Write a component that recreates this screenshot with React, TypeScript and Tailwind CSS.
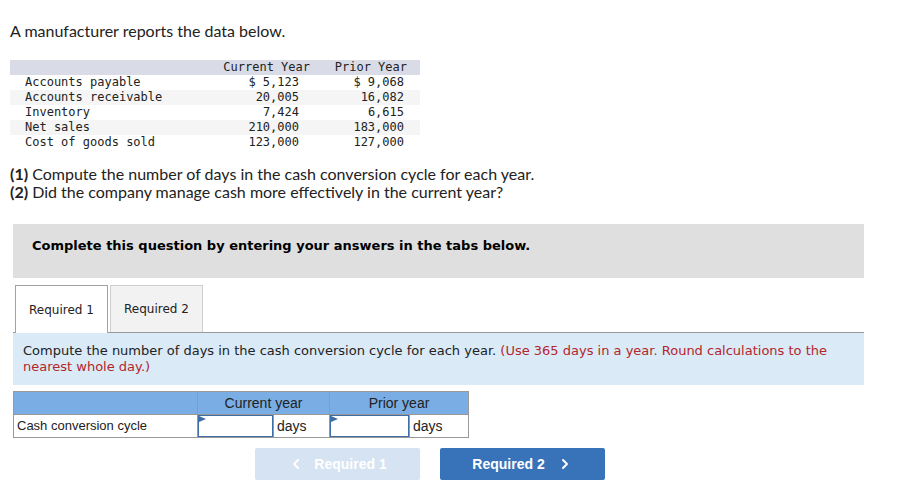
import { ChevronLeft, ChevronRight } from "lucide-react";

const rows = [
  { label: "Accounts payable", cur: "$ 5,123", prior: "$ 9,068" },
  { label: "Accounts receivable", cur: "20,005", prior: "16,082" },
  { label: "Inventory", cur: "7,424", prior: "6,615" },
  { label: "Net sales", cur: "210,000", prior: "183,000" },
  { label: "Cost of goods sold", cur: "123,000", prior: "127,000" },
];

function AnswerInput() {
  return (
    <div className="relative h-[22px] border border-[#3d6ea6] bg-white">
      <svg className="absolute left-0 top-0" width="7" height="7" viewBox="0 0 7 7">
        <path d="M0 0 L7 3 L0 6 Z" fill="#3d6ea6" />
      </svg>
    </div>
  );
}

export default function App() {
  return (
    <div className="w-[909px] min-h-[502px] bg-white pl-[10px] pt-[21px] text-[#222]">
      <p className="font-['Lato',sans-serif] text-[16px] leading-[20px]">
        A manufacturer reports the data below.
      </p>

      <div className="mt-[19px] w-[410px] font-['DejaVu_Sans_Mono',monospace] text-[12px] leading-[15px] text-[#222]">
        <div className="flex h-[15px] bg-[#d9dce6]">
          <div className="w-[210px]" />
          <div className="w-[95px] pr-[5px] text-right">Current Year</div>
          <div className="w-[105px] pr-[13px] text-right">Prior Year</div>
        </div>
        {rows.map((r, i) => (
          <div key={r.label} className={`flex h-[15px] ${i % 2 === 1 ? "bg-[#f5f5f5]" : "bg-white"}`}>
            <div className="w-[210px] pl-[15px]">{r.label}</div>
            <div className="w-[95px] pr-[16px] text-right">{r.cur}</div>
            <div className="w-[105px] pr-[16px] text-right">{r.prior}</div>
          </div>
        ))}
      </div>

      <div className="mt-[15px] font-['Lato',sans-serif] text-[16px] leading-[18px]">
        <p>
          <b>(1)</b> Compute the number of days in the cash conversion cycle for each year.
        </p>
        <p>
          <b>(2)</b> Did the company manage cash more effectively in the current year?
        </p>
      </div>

      <div className="ml-[3px] mt-[23px] h-[54px] w-[851px] bg-[#dfdfdf] pl-[19px] pt-[14px] font-['DejaVu_Sans',sans-serif] text-[13px] font-bold leading-[16px] text-black">
        Complete this question by entering your answers in the tabs below.
      </div>

      <div className="ml-[3px] mt-[7px] w-[851px] font-['DejaVu_Sans',sans-serif]">
        <div className="flex gap-[2px] pl-[2px]">
          <div className="-mb-px flex h-[48px] w-[93px] items-center justify-center border border-b-0 border-[#a3a3a3] bg-white text-[12px] text-[#222]">
            Required 1
          </div>
          <div className="flex h-[47px] w-[93px] items-center justify-center border border-b-0 border-[#cfcfcf] bg-[#f2f2f2] text-[12px] text-[#222]">
            Required 2
          </div>
        </div>
        <div className="border-t border-[#999]" />
        <div className="h-[52px] bg-[#daeaf7] px-[10px] pt-[10px] text-[13px] leading-[16px] text-[#222]">
          Compute the number of days in the cash conversion cycle for each year.{" "}
          <span className="text-[#b3262b]">(Use 365 days in a year. Round calculations to the</span>
          <br />
          <span className="text-[#b3262b]">nearest whole day.)</span>
        </div>

        <table className="mt-[6px] w-[455px] table-fixed border-collapse font-['Liberation_Sans',sans-serif] text-[14px] text-[#222]">
          <colgroup>
            <col className="w-[184px]" />
            <col className="w-[76px]" />
            <col className="w-[56px]" />
            <col className="w-[80px]" />
            <col className="w-[59px]" />
          </colgroup>
          <thead>
            <tr className="h-[23px] bg-[#79ade3]">
              <th className="border border-[#999]" />
              <th colSpan={2} className="border border-[#999] text-center font-normal">
                Current year
              </th>
              <th colSpan={2} className="border border-[#999] text-center font-normal">
                Prior year
              </th>
            </tr>
          </thead>
          <tbody>
            <tr className="h-[23px]">
              <td className="border border-[#999] pl-[3px] text-[13px]">Cash conversion cycle</td>
              <td className="border border-[#999] p-0">
                <AnswerInput />
              </td>
              <td className="border border-[#999] pl-[3px]">days</td>
              <td className="border border-[#999] p-0">
                <AnswerInput />
              </td>
              <td className="border border-[#999] pl-[3px]">days</td>
            </tr>
          </tbody>
        </table>
      </div>

      <div className="mt-[10px] flex gap-[20px] pl-[245px] font-['Liberation_Sans',sans-serif] text-[14px] font-bold text-white">
        <button className="flex h-[32px] w-[165px] items-center justify-center gap-[10px] rounded-[2px] bg-[#d6e3f2]">
          <ChevronLeft size={16} strokeWidth={3} />
          Required 1
        </button>
        <button className="flex h-[32px] w-[165px] items-center justify-center gap-[12px] rounded-[2px] bg-[#3873b9]">
          Required 2
          <ChevronRight size={16} strokeWidth={3} />
        </button>
      </div>
    </div>
  );
}
